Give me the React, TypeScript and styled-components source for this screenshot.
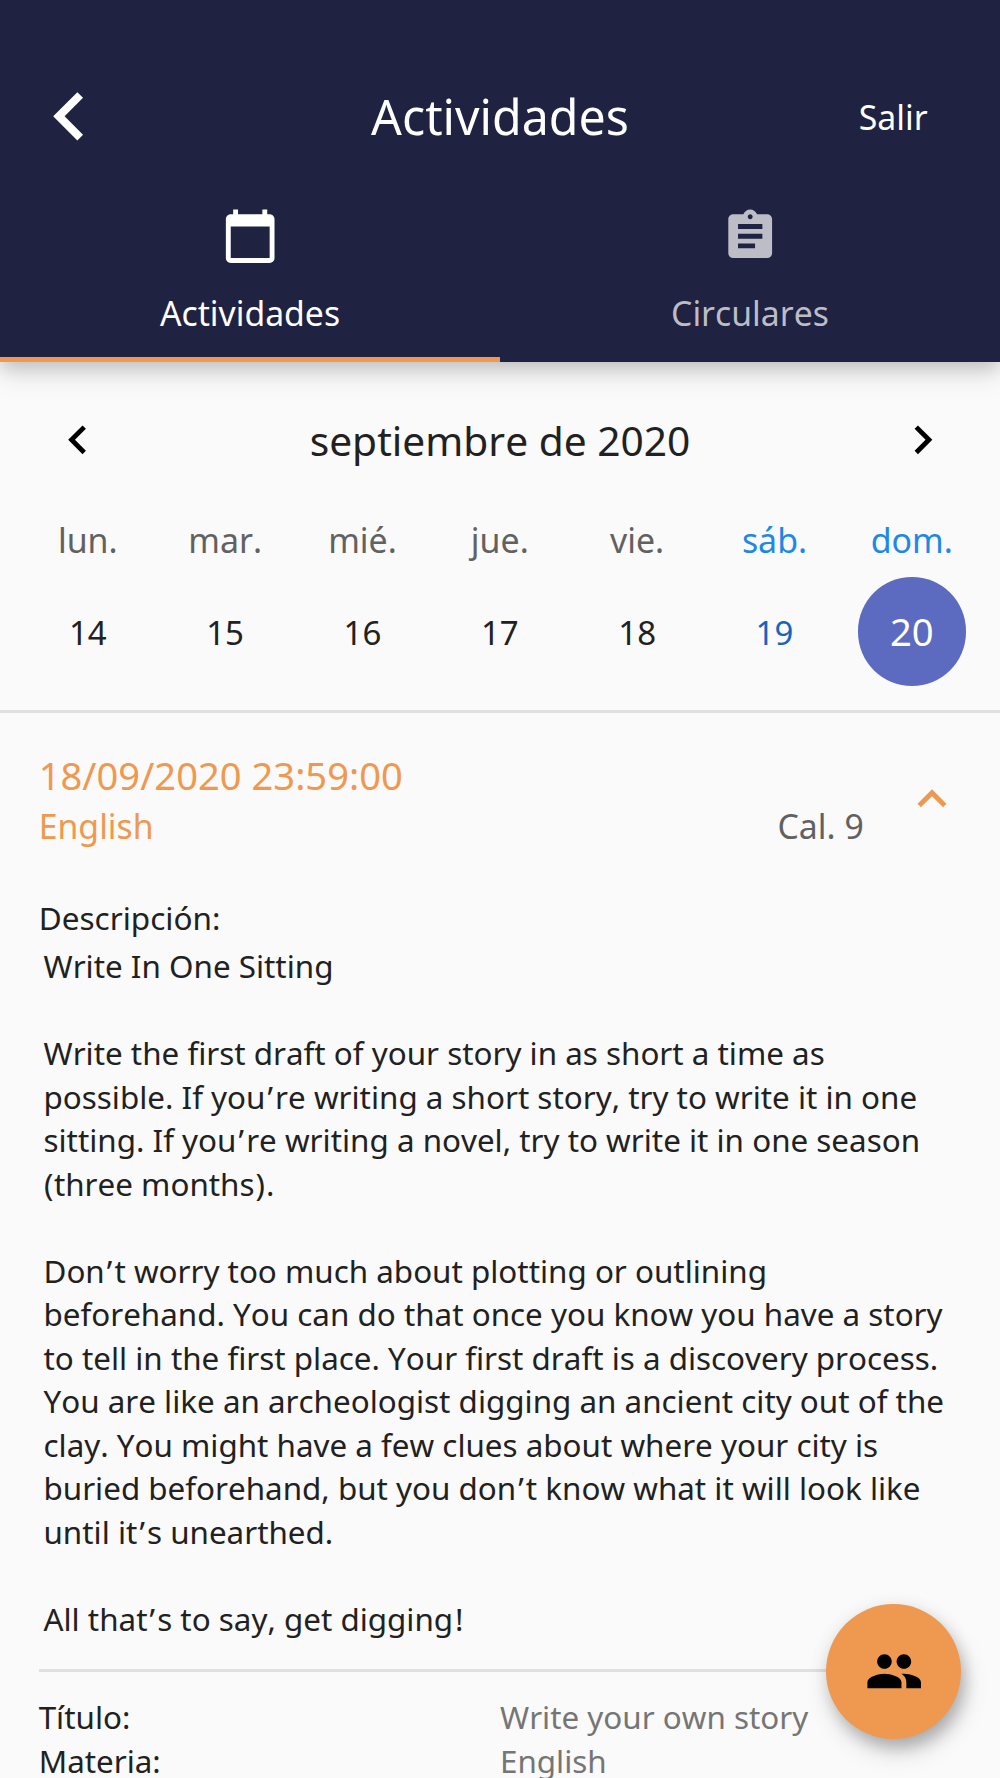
import React from 'react';
import styled, { createGlobalStyle } from 'styled-components';
import {
  MdAssignment,
  MdCalendarToday,
  MdExpandLess,
  MdNavigateBefore,
  MdNavigateNext,
  MdPeople,
} from 'react-icons/md';

const colors = {
  navy: '#1f2240',
  orange: '#ef984f',
  background: '#fafafa',
  text: '#212121',
  muted: '#616161',
  value: '#757575',
  divider: '#e0e0e0',
  weekendLabel: '#1e88e5',
  weekendDay: '#1565c0',
  selected: '#5c6bc0',
};

const GlobalStyle = createGlobalStyle`
  *, *::before, *::after { box-sizing: border-box; }
  body {
    margin: 0;
    background: ${colors.background};
    color: ${colors.text};
    font-family: "Noto Sans", sans-serif;
    font-kerning: none;
  }
  button {
    border: 0;
    padding: 0;
    background: none;
    font: inherit;
    color: inherit;
    font-kerning: inherit;
  }
  svg { display: block; }
`;

const Screen = styled.div`
  position: relative;
  width: 1000px;
  height: 1778px;
  overflow: hidden;
  background: ${colors.background};
`;

const Header = styled.header`
  position: relative;
  z-index: 1;
  height: 362.4px;
  padding-top: 48px;
  background: ${colors.navy};
  color: #fff;
  box-shadow:
    0 6px 16px 0 rgba(0, 0, 0, 0.12),
    0 10px 26px 0 rgba(0, 0, 0, 0.14);
`;

const TopBar = styled.div`
  display: grid;
  grid-template-columns: 1fr auto 1fr;
  align-items: center;
  height: 136px;
`;

const BackButton = styled.button`
  justify-self: start;
  margin-left: 21px;
  font-size: 96.6px;
`;

const Title = styled.h1`
  margin: 0;
  font-size: 48.3px;
  font-weight: 400;
  line-height: 66px;
`;

const ExitButton = styled.button`
  justify-self: end;
  margin-right: 72.4px;
  padding-top: 2px;
  font-size: 33.8px;
  line-height: 46px;
`;

const Tabs = styled.nav`
  display: grid;
  grid-template-columns: 1fr 1fr;
  height: 178.4px;
`;

const Tab = styled.button<{ $active?: boolean }>`
  display: flex;
  flex-direction: column;
  align-items: center;
  justify-content: flex-start;
  gap: 25px;
  padding-top: 22.6px;
  border-bottom: 5px solid ${(p) => (p.$active ? colors.orange : 'transparent')};
  color: ${(p) => (p.$active ? '#fff' : '#bcbdc6')};
  font-size: 33.75px;
  line-height: 46px;

  svg { font-size: 58.4px; }
`;

const Calendar = styled.section`
  border-bottom: 3px solid ${colors.divider};
  padding-bottom: 9.4px;
`;

const MonthBar = styled.div`
  display: flex;
  align-items: center;
  justify-content: space-between;
  height: 155px;
  padding: 0 48.7px;
`;

const MonthButton = styled.button`
  color: #000;
  font-size: 57.5px;
`;

const Month = styled.h2`
  margin: 0;
  font-size: 40.7px;
  font-weight: 400;
  line-height: 56px;
`;

const Week = styled.div`
  display: grid;
  grid-template-columns: repeat(7, 1fr);
  padding: 0 19.5px 0 19.1px;
`;

const Day = styled.div`
  display: flex;
  flex-direction: column;
  align-items: center;
`;

const DayName = styled.span<{ $weekend: boolean }>`
  height: 45px;
  color: ${(p) => (p.$weekend ? colors.weekendLabel : colors.muted)};
  font-size: 33.9px;
  line-height: 47.6px;
`;

const DayNumber = styled.span<{ $weekend: boolean; $selected: boolean }>`
  display: flex;
  align-items: center;
  justify-content: center;
  width: 108.4px;
  height: 108.4px;
  margin: 14.8px 0;
  padding-top: ${(p) => (p.$selected ? 0 : 3.4)}px;
  border-radius: 50%;
  background: ${(p) => (p.$selected ? colors.selected : 'transparent')};
  color: ${(p) => (p.$selected ? '#fff' : p.$weekend ? colors.weekendDay : colors.text)};
  font-size: ${(p) => (p.$selected ? 38.2 : 33)}px;
  line-height: 46px;
`;

const Activity = styled.article`
  padding: 36px 38.7px 0;
`;

const ActivityHeader = styled.header`
  display: flex;
  align-items: center;
  gap: 39.6px;
  color: ${colors.orange};
`;

const Summary = styled.div`
  flex: 1;
`;

const DueDate = styled.div`
  font-size: 38.15px;
  line-height: 52.6px;
`;

const SubjectRow = styled.div`
  display: flex;
  justify-content: space-between;
  font-size: 33.8px;
  line-height: 50.4px;
`;

const Grade = styled.span`
  color: ${colors.muted};
`;

const ExpandButton = styled.button`
  margin-bottom: 2px;
  font-size: 58px;
`;

const DescriptionLabel = styled.div`
  margin-top: 44.6px;
  font-size: 31.5px;
  line-height: 43.5px;
`;

const Description = styled.div`
  margin-top: 4.2px;
  padding-left: 4.8px;
  font-size: 31.36px;
  line-height: 43.5px;
`;

const Line = styled.div`
  height: 43.5px;
  white-space: pre;
`;

const Mark = styled.span<{ $space: number }>`
  margin: 0 ${(p) => p.$space}px;
`;

const Details = styled.dl`
  display: grid;
  grid-template-columns: 1fr 1fr;
  margin: 28.8px 0 0;
  padding-top: 23.6px;
  border-top: 3px solid ${colors.divider};
  font-size: 31.36px;
  line-height: 43.5px;
`;

const Term = styled.dt``;

const Value = styled.dd`
  margin: 0;
  color: ${colors.value};
`;

const PeopleButton = styled.button`
  position: absolute;
  right: 38.7px;
  bottom: 38.8px;
  z-index: 2;
  display: flex;
  align-items: center;
  justify-content: center;
  width: 135.2px;
  height: 135.2px;
  border-radius: 50%;
  background: ${colors.orange};
  color: #000;
  font-size: 58.4px;
  box-shadow:
    5px 10px 16px -2px rgba(0, 0, 0, 0.2),
    4px 13px 26px 0 rgba(0, 0, 0, 0.14),
    0 2px 20px 0 rgba(0, 0, 0, 0.06);
`;

const week = [
  { name: 'lun.', number: 14 },
  { name: 'mar.', number: 15 },
  { name: 'mié.', number: 16 },
  { name: 'jue.', number: 17 },
  { name: 'vie.', number: 18 },
  { name: 'sáb.', number: 19, weekend: true },
  { name: 'dom.', number: 20, weekend: true },
];

const description = `Write In One Sitting

Write the first draft of your story in as short a time as
possible. If you’re writing a short story, try to write it in one
sitting. If you’re writing a novel, try to write it in one season
(three months).

Don’t worry too much about plotting or outlining
beforehand. You can do that once you know you have a story
to tell in the first place. Your first draft is a discovery process.
You are like an archeologist digging an ancient city out of the
clay. You might have a few clues about where your city is
buried beforehand, but you don’t know what it will look like
until it’s unearthed.

All that’s to say, get digging!`;

const markSpace: Record<string, number> = { '’': 2.1, '!': 1.8, '(': 0.5, ')': 1 };

const details = [
  ['Título:', 'Write your own story'],
  ['Materia:', 'English'],
];

export default function App() {
  const selected = 20;

  return (
    <Screen>
      <GlobalStyle />
      <Header>
        <TopBar>
          <BackButton><MdNavigateBefore /></BackButton>
          <Title>Actividades</Title>
          <ExitButton>Salir</ExitButton>
        </TopBar>
        <Tabs>
          <Tab $active><MdCalendarToday />Actividades</Tab>
          <Tab><MdAssignment />Circulares</Tab>
        </Tabs>
      </Header>

      <Calendar>
        <MonthBar>
          <MonthButton><MdNavigateBefore /></MonthButton>
          <Month>septiembre de 2020</Month>
          <MonthButton><MdNavigateNext /></MonthButton>
        </MonthBar>
        <Week>
          {week.map((day) => (
            <Day key={day.number}>
              <DayName $weekend={!!day.weekend}>{day.name}</DayName>
              <DayNumber $weekend={!!day.weekend} $selected={day.number === selected}>
                {day.number}
              </DayNumber>
            </Day>
          ))}
        </Week>
      </Calendar>

      <Activity>
        <ActivityHeader>
          <Summary>
            <DueDate>18/09/2020 23:59:00</DueDate>
            <SubjectRow>
              <span>English</span>
              <Grade>Cal. 9</Grade>
            </SubjectRow>
          </Summary>
          <ExpandButton><MdExpandLess /></ExpandButton>
        </ActivityHeader>
        <DescriptionLabel>Descripción:</DescriptionLabel>
        <Description>
          {description.split('\n').map((line, row) => (
            <Line key={row}>
              {line.split(/([’!()])/).map((part, i) =>
                part in markSpace ? <Mark key={i} $space={markSpace[part]}>{part}</Mark> : part,
              )}
            </Line>
          ))}
        </Description>
        <Details>
          {details.map(([term, value]) => (
            <React.Fragment key={term}>
              <Term>{term}</Term>
              <Value>{value}</Value>
            </React.Fragment>
          ))}
        </Details>
      </Activity>

      <PeopleButton><MdPeople /></PeopleButton>
    </Screen>
  );
}
